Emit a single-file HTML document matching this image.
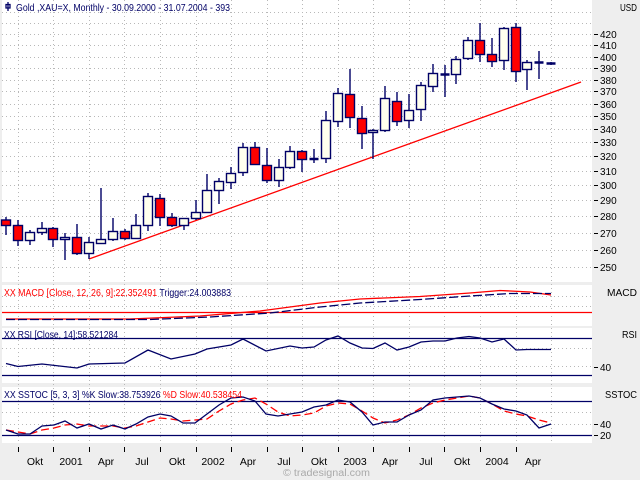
<!DOCTYPE html>
<html><head><meta charset="utf-8"><style>
html,body{margin:0;padding:0;background:#eeeeee;}
svg{display:block;font-family:"Liberation Sans",sans-serif;}
</style></head><body>
<svg width="640" height="480" viewBox="0 0 640 480" xmlns="http://www.w3.org/2000/svg">
<rect x="0" y="0" width="640" height="480" fill="#eeeeee"/>
<rect x="2" y="0" width="590" height="282" fill="#ffffff"/>
<rect x="2" y="285" width="590" height="41" fill="#ffffff"/>
<rect x="2" y="328" width="590" height="55" fill="#ffffff"/>
<rect x="2" y="387" width="590" height="56" fill="#ffffff"/>
<g stroke="#b8b8b8" stroke-width="1" stroke-dasharray="1,3">
<path d="M18.5 0V443M53.5 0V443M89.5 0V443M124.5 0V443M160.5 0V443M196.5 0V443M231.5 0V443M267.5 0V443M302.5 0V443M338.5 0V443M373.5 0V443M409.5 0V443M444.5 0V443M480.5 0V443M516.5 0V443M551.5 0V443"/>
<path d="M2 12.5H592M2 23.5H592M2 34.5H592M2 45.5H592M2 57.5H592M2 68.5H592M2 80.5H592M2 91.5H592M2 104.5H592M2 116.5H592M2 129.5H592M2 142.5H592M2 156.5H592M2 171.5H592M2 185.5H592M2 200.5H592M2 216.5H592M2 233.5H592M2 250.5H592M2 267.5H592"/>
<path d="M2 296.5H592M2 306.5H592M2 348.5H592M2 366.5H592M2 412.5H592M2 424.5H592"/>
</g>
<line x1="89" y1="259" x2="581" y2="82" stroke="#ff0000" stroke-width="1.3"/>
<g stroke="#000066" stroke-width="1.4">
<path d="M6 217V235M18 220V246M30 230V245M42 222V235M53 227V247M65 233V260M77 224V255M89 237V259M101 188V243M113 218V241M125 229V240M136 214V239M148 193V231M160 194V226M172 213V227M184 218V230M196 200V220M207 174V213M219 178V204M231 167V189M243 143V176M255 142V165M267 148V183M279 159V187M290 146V169M302 150V172M314 149V163M326 111V163M338 88V127M350 69V128M362 106V149M373 129V159M385 86V132M397 92V126M409 94V128M421 82V121M433 64V92M445 65V97M456 56V84M468 37V60M480 23V62M492 38V67M504 27V70M516 23V82M527 60V90M539 51V79M551 62V65"/>
</g>
<g stroke="#000066" stroke-width="1.4">
<rect x="1.5" y="220" width="9" height="5.5" fill="#ff0000"/>
<rect x="13.5" y="225.5" width="9" height="15" fill="#ff0000"/>
<rect x="25.5" y="232.5" width="9" height="8" fill="#ffffee"/>
<rect x="37.5" y="228.5" width="9" height="4" fill="#ffffee"/>
<rect x="48.5" y="228.5" width="9" height="11" fill="#ff0000"/>
<rect x="60.5" y="237.5" width="9" height="2" fill="#ffffee"/>
<rect x="72.5" y="237.5" width="9" height="16" fill="#ff0000"/>
<rect x="84.5" y="242.5" width="9" height="11" fill="#ffffee"/>
<rect x="96.5" y="239.5" width="9" height="4" fill="#ffffee"/>
<rect x="108.5" y="231.5" width="9" height="8" fill="#ffffee"/>
<rect x="120.5" y="231.5" width="9" height="7" fill="#ff0000"/>
<rect x="131.5" y="225.5" width="9" height="13" fill="#ffffee"/>
<rect x="143.5" y="196.5" width="9" height="29" fill="#ffffee"/>
<rect x="155.5" y="198.5" width="9" height="19" fill="#ff0000"/>
<rect x="167.5" y="217.5" width="9" height="8" fill="#ff0000"/>
<rect x="179.5" y="218.5" width="9" height="7" fill="#ffffee"/>
<rect x="191.5" y="212.5" width="9" height="6" fill="#ffffee"/>
<rect x="202.5" y="190.5" width="9" height="22" fill="#ffffee"/>
<rect x="214.5" y="181.5" width="9" height="9" fill="#ffffee"/>
<rect x="226.5" y="173.5" width="9" height="9" fill="#ffffee"/>
<rect x="238.5" y="147.5" width="9" height="25" fill="#ffffee"/>
<rect x="250.5" y="147.5" width="9" height="17" fill="#ff0000"/>
<rect x="262.5" y="165.5" width="9" height="15" fill="#ff0000"/>
<rect x="274.5" y="167.5" width="9" height="13" fill="#ffffee"/>
<rect x="285.5" y="151.5" width="9" height="16" fill="#ffffee"/>
<rect x="297.5" y="151.5" width="9" height="8" fill="#ff0000"/>
<rect x="321.5" y="120.5" width="9" height="38" fill="#ffffee"/>
<rect x="333.5" y="93.5" width="9" height="28" fill="#ffffee"/>
<rect x="345.5" y="94.5" width="9" height="23" fill="#ff0000"/>
<rect x="357.5" y="118.5" width="9" height="15" fill="#ff0000"/>
<rect x="368.5" y="130.5" width="9" height="2" fill="#ffffee"/>
<rect x="380.5" y="98.5" width="9" height="32" fill="#ffffee"/>
<rect x="392.5" y="101.5" width="9" height="20" fill="#ff0000"/>
<rect x="404.5" y="110.5" width="9" height="10" fill="#ffffee"/>
<rect x="416.5" y="85.5" width="9" height="24" fill="#ffffee"/>
<rect x="428.5" y="73.5" width="9" height="13" fill="#ffffee"/>
<rect x="451.5" y="59.5" width="9" height="15" fill="#ffffee"/>
<rect x="463.5" y="40.5" width="9" height="18" fill="#ffffee"/>
<rect x="475.5" y="40.5" width="9" height="14" fill="#ff0000"/>
<rect x="487.5" y="54.5" width="9" height="7" fill="#ff0000"/>
<rect x="499.5" y="28.5" width="9" height="32" fill="#ffffee"/>
<rect x="511.5" y="27.5" width="9" height="44" fill="#ff0000"/>
<rect x="522.5" y="62.5" width="9" height="7" fill="#ffffee"/>
</g>
<g stroke="#000066" stroke-width="2.5">
<path d="M309.5 159H318.5M440.5 74.5H449.5M534.5 62.5H543.5M546.5 63.5H555.5"/>
</g>
<line x1="2" y1="312.5" x2="592" y2="312.5" stroke="#ff0000" stroke-width="1.3"/>
<polyline points="6,319 130,319 200,316 260,311 320,303 360,299 420,296.5 470,293 500,290.5 530,292 551,295" fill="none" stroke="#ff0000" stroke-width="1.3"/>
<polyline points="6,319.5 150,319.5 210,317 270,313 320,307 360,303 420,299.5 470,296 510,293.5 551,293.5" fill="none" stroke="#000066" stroke-width="1.3" stroke-dasharray="9,3"/>
<line x1="2" y1="338.5" x2="592" y2="338.5" stroke="#000066" stroke-width="1.3"/>
<line x1="2" y1="375.5" x2="592" y2="375.5" stroke="#000066" stroke-width="1.3"/>
<polyline points="6,363.5 18,366.5 42,364 77,368 89,364 125,363 148,350 171,359 195,354 207,349 231,345 243,339 266,351 290,346 302,348 314,347 326,340 338,336 350,343 362,348 373,348.5 385,343 397,350 409,347 421,342 433,341 445,341 457,338 469,336.5 480,338 492,342 504,339 516,350 527,349.5 551,349.5" fill="none" stroke="#000066" stroke-width="1.3"/>
<line x1="2" y1="401.5" x2="592" y2="401.5" stroke="#000066" stroke-width="1.3"/>
<line x1="2" y1="435.5" x2="592" y2="435.5" stroke="#000066" stroke-width="1.3"/>
<polyline points="6,430 18,432 30,434 42,430 54,428 65,425 77,424 89,426 101,426 113,426 125,428 136,426 148,422 160,418 171,419 183,421 195,420 207,419 219,411 231,404 243,400 255,398 266,404 278,412 290,416 302,415 314,413 326,406 338,403 350,404 362,411 373,418 385,423 397,420 409,415 421,408 433,403 445,400 457,398 469,396 480,398 492,404 504,411 516,414 527,416 539,420 551,423" fill="none" stroke="#ff0000" stroke-width="1.3" stroke-dasharray="8,4"/>
<polyline points="6,430 18,434 30,434 42,426 54,425 65,421 77,428 89,424 101,429 113,425 125,429 136,424 148,417 160,414 171,416 183,423 195,423 207,414 219,405 231,398 243,397 255,401 266,414 278,416 290,414 302,412 314,407 326,405 338,400 350,402 362,412 373,425 385,422 397,422 409,415 421,410 433,400 445,398 457,397 469,396 480,398 492,404 504,409 516,411 527,415 539,428 551,424" fill="none" stroke="#000066" stroke-width="1.3"/>
<g stroke="#000000" stroke-width="1">
<path d="M18.5 447V452M53.5 447V452M89.5 447V452M124.5 447V452M160.5 447V452M196.5 447V452M231.5 447V452M267.5 447V452M302.5 447V452M338.5 447V452M373.5 447V452M409.5 447V452M444.5 447V452M480.5 447V452M516.5 447V452"/>
</g>
<g font-size="10.5" fill="#000000" text-anchor="middle">
<text x="35" y="465">Okt</text><text x="71" y="465">2001</text><text x="106" y="465">Apr</text><text x="142" y="465">Jul</text><text x="177" y="465">Okt</text><text x="213" y="465">2002</text><text x="248" y="465">Apr</text><text x="284" y="465">Jul</text><text x="319" y="465">Okt</text><text x="355" y="465">2003</text><text x="390" y="465">Apr</text><text x="426" y="465">Jul</text><text x="462" y="465">Okt</text><text x="497" y="465">2004</text><text x="533" y="465">Apr</text>
</g>
<text x="283" y="476" font-size="10" fill="#aaaaaa" textLength="87" lengthAdjust="spacingAndGlyphs">© tradesignal.com</text>
<g font-size="10" fill="#000000">
<text x="620" y="11" textLength="17" lengthAdjust="spacingAndGlyphs">USD</text>
<text x="600" y="38">420</text><text x="600" y="49">410</text><text x="600" y="61">400</text><text x="600" y="72">390</text><text x="600" y="84">380</text><text x="600" y="95">370</text><text x="600" y="108">360</text><text x="600" y="120">350</text><text x="600" y="133">340</text><text x="600" y="146">330</text><text x="600" y="160">320</text><text x="600" y="175">310</text><text x="600" y="189">300</text><text x="600" y="204">290</text><text x="600" y="220">280</text><text x="600" y="237">270</text><text x="600" y="254">260</text><text x="600" y="271">250</text>
<text x="607" y="296" textLength="30" lengthAdjust="spacingAndGlyphs">MACD</text>
<text x="622" y="338" textLength="15" lengthAdjust="spacingAndGlyphs">RSI</text>
<text x="600" y="371">40</text>
<text x="605" y="398" textLength="32" lengthAdjust="spacingAndGlyphs">SSTOC</text>
<text x="600" y="428">40</text>
<text x="600" y="439">20</text>
</g>
<g stroke="#000000" stroke-width="1">
<path d="M594 34.5H598M594 45.5H598M594 57.5H598M594 68.5H598M594 80.5H598M594 91.5H598M594 104.5H598M594 116.5H598M594 129.5H598M594 142.5H598M594 156.5H598M594 171.5H598M594 185.5H598M594 200.5H598M594 216.5H598M594 233.5H598M594 250.5H598M594 267.5H598M594 367.5H598M594 424.5H598M594 435.5H598"/>
</g>
<text x="16" y="11" font-size="10.5" fill="#000066" textLength="214" lengthAdjust="spacingAndGlyphs">Gold ,XAU=X, Monthly - 30.09.2000 - 31.07.2004 - 393</text>
<path d="M8 2V11M6 4.5H10V8H6Z" stroke="#000066" stroke-width="1.3" fill="none"/>
<text x="4" y="296" font-size="10.5" fill="#ff0000" textLength="227" lengthAdjust="spacingAndGlyphs">XX MACD [Close, 12, 26, 9]:22.352491 <tspan fill="#000066">Trigger:24.003883</tspan></text>
<text x="4" y="338" font-size="10.5" fill="#000066" textLength="114" lengthAdjust="spacingAndGlyphs">XX RSI [Close, 14]:58.521284</text>
<text x="4" y="398" font-size="10.5" fill="#000066" textLength="238" lengthAdjust="spacingAndGlyphs">XX SSTOC [5, 3, 3] %K Slow:38.753926 <tspan fill="#ff0000">%D Slow:40.538454</tspan></text>
</svg>
</body></html>
